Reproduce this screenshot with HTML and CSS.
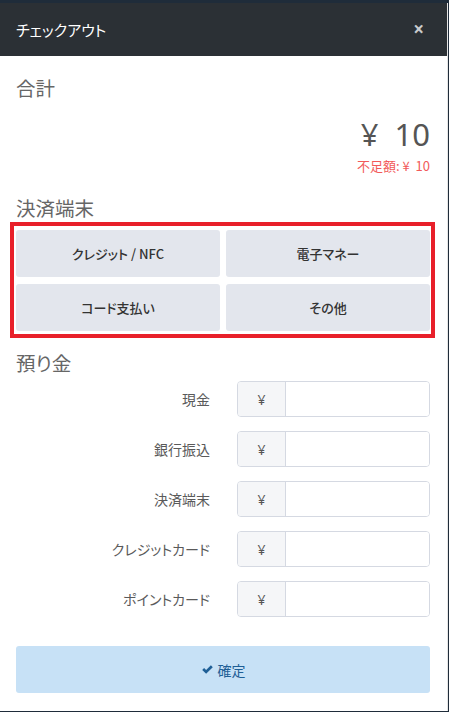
FILE: index.html
```html
<!DOCTYPE html>
<html lang="ja">
<head>
<meta charset="utf-8">
<title>チェックアウト</title>
<link rel="stylesheet" href="styles.css">
</head>
<body>
<div class="modal">
  <div class="modal-header">
    <span class="modal-title">チェックアウト</span>
    <span class="close">×</span>
  </div>
  <div class="modal-body">
    <h3 class="section-title first">合計</h3>
    <div class="total">¥&nbsp; 10</div>
    <div class="shortage">不足額: ¥&nbsp; 10</div>

    <h3 class="section-title terminal">決済端末</h3>
    <div class="terminal-grid">
      <button class="term-btn">クレジット / NFC</button>
      <button class="term-btn">電子マネー</button>
      <button class="term-btn">コード支払い</button>
      <button class="term-btn">その他</button>
    </div>

    <h3 class="section-title deposit">預り金</h3>
    <div class="form-rows">
      <div class="form-row">
        <label class="row-label">現金</label>
        <div class="input-group"><span class="addon">¥</span><input class="amount" type="text"></div>
      </div>
      <div class="form-row">
        <label class="row-label">銀行振込</label>
        <div class="input-group"><span class="addon">¥</span><input class="amount" type="text"></div>
      </div>
      <div class="form-row">
        <label class="row-label">決済端末</label>
        <div class="input-group"><span class="addon">¥</span><input class="amount" type="text"></div>
      </div>
      <div class="form-row">
        <label class="row-label">クレジットカード</label>
        <div class="input-group"><span class="addon">¥</span><input class="amount" type="text"></div>
      </div>
      <div class="form-row">
        <label class="row-label">ポイントカード</label>
        <div class="input-group"><span class="addon">¥</span><input class="amount" type="text"></div>
      </div>
    </div>

    <button class="confirm">
      <svg class="check" viewBox="0 0 16 16" width="13" height="13"><path d="M1.5 8.5 L3.8 6.2 L6.3 8.7 L12.2 2.8 L14.5 5.1 L6.3 13.3 Z" fill="currentColor"/></svg>
      <span>確定</span>
    </button>
  </div>
</div>
</body>
</html>
```
FILE: styles.css
```css
* { box-sizing: border-box; }
html, body { margin: 0; padding: 0; }
body {
  background: #1f2c3a;
  font-family: "Noto Sans", "Noto Sans CJK JP", sans-serif;
  width: 449px;
  height: 712px;
  overflow: hidden;
}
.modal {
  margin-top: 3px;
  width: 448px;
  height: 708px;
  background: #fff;
  border-right: 1px solid #e6e6e6;
}
.modal-header {
  height: 53px;
  background: #2b3035;
  display: flex;
  align-items: center;
  justify-content: space-between;
  padding: 0 23px 0 16px;
}
.modal-title {
  color: #fff;
  font-size: 15px;
  font-family: "Noto Sans CJK JP", sans-serif;
  font-feature-settings: "palt";
}
.close {
  color: #c8cacc;
  font-size: 19px;
  font-weight: bold;
  line-height: 1;
}
.modal-body {
  padding: 0 17px 0 16px;
}
.section-title {
  margin: 0;
  font-weight: normal;
  font-size: 19.5px;
  line-height: 24px;
  color: #666;
  font-family: "Noto Sans CJK JP", sans-serif;
  font-feature-settings: "palt";
}
.section-title.first { margin-top: 20px; }
.total {
  text-align: right;
  font-size: 31px;
  line-height: 40px;
  color: #555;
  margin-top: 14px;
}
.shortage {
  text-align: right;
  font-size: 13px;
  line-height: 18px;
  color: #f25a5a;
  font-family: "Noto Sans CJK JP", sans-serif;
  font-feature-settings: "palt";
  margin-top: 3px;
}
.section-title.terminal { margin-top: 21px; margin-bottom: 10px; }
.terminal-grid {
  position: relative;
  display: grid;
  grid-template-columns: 1fr 1fr;
  gap: 7px 6px;
}
.terminal-grid::after {
  content: "";
  position: absolute;
  left: -6px;
  top: -8px;
  right: -5px;
  bottom: -7px;
  border: 4px solid #e8202a;
  pointer-events: none;
}
.term-btn {
  height: 47px;
  border: none;
  border-radius: 3px;
  background: #e3e6ed;
  color: #333;
  font-weight: 500;
  font-size: 13px;
  font-family: "Noto Sans CJK JP", sans-serif;
  font-feature-settings: "palt";
}
.section-title.deposit { margin-top: 20px; }
.form-rows {
  margin-top: 6px;
  display: flex;
  flex-direction: column;
  gap: 14px;
}
.form-row {
  display: flex;
  align-items: center;
}
.row-label {
  width: 194px;
  text-align: right;
  font-size: 14px;
  color: #5a5a5a;
  font-family: "Noto Sans CJK JP", sans-serif;
  font-feature-settings: "palt";
}
.input-group {
  margin-left: 27px;
  flex: 1;
  display: flex;
  height: 36px;
  border: 1px solid #d5d9e2;
  border-radius: 4px;
  overflow: hidden;
}
.addon {
  width: 48px;
  background: #f5f6f8;
  border-right: 1px solid #d5d9e2;
  display: flex;
  align-items: center;
  justify-content: center;
  font-size: 14px;
  color: #555;
}
.amount {
  flex: 1;
  border: none;
  outline: none;
  min-width: 0;
  background: #fff;
}
.confirm {
  margin-top: 29px;
  width: 100%;
  height: 47px;
  border: none;
  border-radius: 3px;
  background: #c7e1f6;
  color: #1f5f96;
  font-size: 14px;
  font-family: "Noto Sans CJK JP", sans-serif;
  display: flex;
  align-items: center;
  justify-content: center;
  gap: 4px;
}
.check { display: block; }
```
